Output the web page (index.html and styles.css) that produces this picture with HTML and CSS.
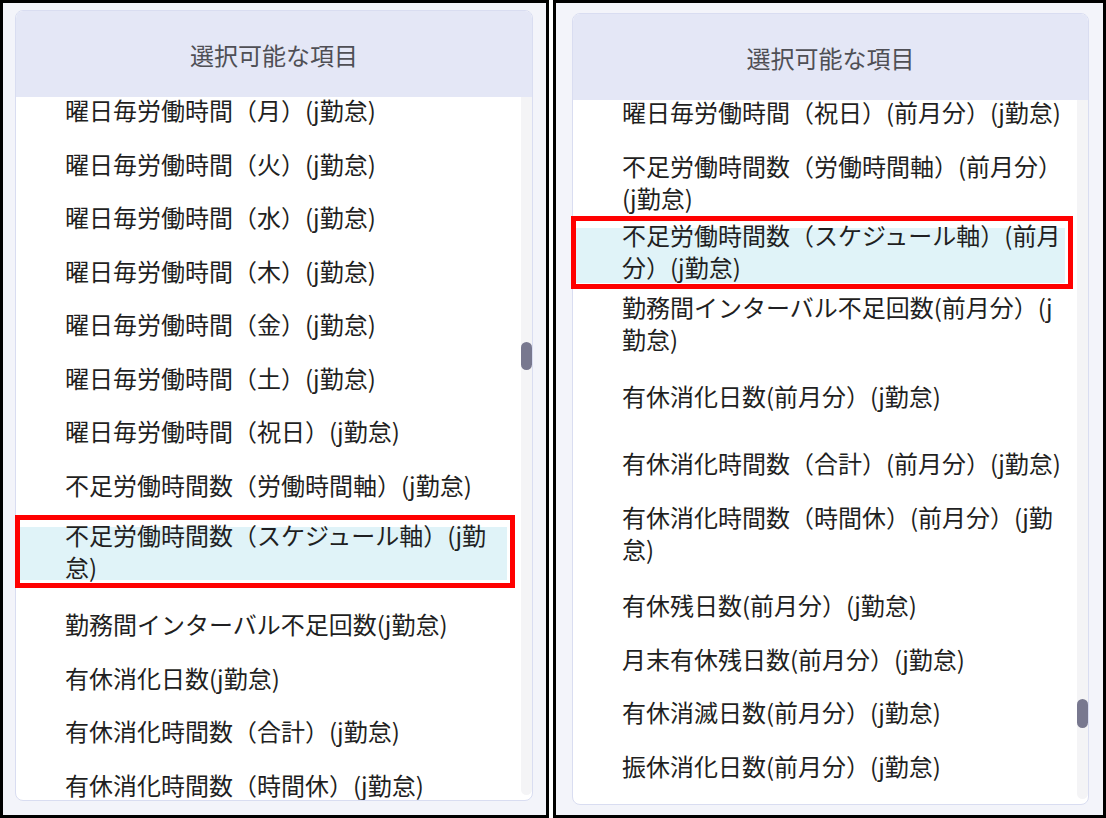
FILE: index.html
```html
<!DOCTYPE html>
<html lang="ja">

<head>
  <meta charset="UTF-8">
  <meta name="viewport" content="width=device-width, initial-scale=1.0">
  <title>選択可能な項目</title>
  <link rel="stylesheet" href="styles.css">
</head>

<body>
  <div class="panel panel-a">
    <section class="picker">
      <h2 class="picker-title">選択可能な項目</h2>
      <div class="picker-body">
        <div class="picker-view">
          <ul class="picker-list">
            <li class="item">曜日毎労働時間（月）(j勤怠)</li>
            <li class="item">曜日毎労働時間（火）(j勤怠)</li>
            <li class="item">曜日毎労働時間（水）(j勤怠)</li>
            <li class="item">曜日毎労働時間（木）(j勤怠)</li>
            <li class="item">曜日毎労働時間（金）(j勤怠)</li>
            <li class="item">曜日毎労働時間（土）(j勤怠)</li>
            <li class="item">曜日毎労働時間（祝日）(j勤怠)</li>
            <li class="item">不足労働時間数（労働時間軸）(j勤怠)</li>
            <li class="item item-active">不足労働時間数（スケジュール軸）(j勤怠)</li>
            <li class="item">勤務間インターバル不足回数(j勤怠)</li>
            <li class="item">有休消化日数(j勤怠)</li>
            <li class="item">有休消化時間数（合計）(j勤怠)</li>
            <li class="item">有休消化時間数（時間休）(j勤怠)</li>
          </ul>
        </div>
        <div class="scroll-track"><span class="scroll-thumb"></span></div>
      </div>
    </section>
    <div class="callout"></div>
  </div>

  <div class="panel panel-b">
    <section class="picker">
      <h2 class="picker-title">選択可能な項目</h2>
      <div class="picker-body">
        <div class="picker-view">
          <ul class="picker-list">
            <li class="item">曜日毎労働時間（祝日）(前月分）(j勤怠)</li>
            <li class="item item-wrap">不足労働時間数（労働時間軸）(前月分）(j勤怠)</li>
            <li class="item item-active">不足労働時間数（スケジュール軸）(前月分）(j勤怠)</li>
            <li class="item item-wrap">勤務間インターバル不足回数(前月分）(j勤怠)</li>
            <li class="item item-gap">有休消化日数(前月分）(j勤怠)</li>
            <li class="item">有休消化時間数（合計）(前月分）(j勤怠)</li>
            <li class="item item-wrap">有休消化時間数（時間休）(前月分）(j勤怠)</li>
            <li class="item">有休残日数(前月分）(j勤怠)</li>
            <li class="item">月末有休残日数(前月分）(j勤怠)</li>
            <li class="item">有休消滅日数(前月分）(j勤怠)</li>
            <li class="item">振休消化日数(前月分）(j勤怠)</li>
          </ul>
        </div>
        <div class="scroll-track"><span class="scroll-thumb"></span></div>
      </div>
    </section>
    <div class="callout"></div>
  </div>
</body>

</html>
```

FILE: styles.css
```css
* {
  margin: 0;
  padding: 0;
  box-sizing: border-box;
  font-family: 'Noto Sans CJK JP', 'Noto Sans', sans-serif;
}

html,
body {
  width: 100%;
  height: 100%;
}

body {
  background: #fff;
  display: flex;
  gap: 4px;
  overflow: hidden;
}

.panel {
  position: relative;
  height: 818px;
  background: #f3f4fa;
  border: 3px solid #000;
  display: flex;
}

.panel-a {
  width: 549px;
  padding: 7px 13px 14px 12px;
}

.panel-b {
  width: 553px;
  padding: 10px 14px 10px 16px;
}

.picker {
  flex: 1;
  display: flex;
  flex-direction: column;
  background: #fff;
  border: 1px solid #d9ddf1;
  border-radius: 8px;
  overflow: hidden;
}

.picker-title {
  height: 86px;
  flex: none;
  display: flex;
  justify-content: center;
  align-items: center;
  background: #e4e7f6;
  color: #4f4f55;
  font-size: 24px;
  font-weight: normal;
}

.picker-body {
  flex: 1;
  min-height: 0;
  display: flex;
}

.picker-view {
  flex: 1;
  overflow: hidden;
  padding-right: 14px;
}

.panel-b .picker-view {
  padding-right: 12px;
}

.picker-list {
  list-style: none;
  margin-top: -11.75px;
}

.panel-b .picker-list {
  margin-top: -12.75px;
}

.item {
  padding: 8.75px 0 12.75px 49px;
  color: #1f1f22;
  font-size: 24px;
  line-height: 32px;
}

.item-wrap {
  padding-bottom: 15.75px;
}

.item-gap {
  padding-bottom: 26.75px;
}

.panel-a .item-active {
  padding-top: 5.75px;
  padding-bottom: 16.25px;
  background: linear-gradient(to bottom,
      transparent 13.75px, #e0f3f8 13.75px,
      #e0f3f8 66.75px, transparent 66.75px);
}

.panel-b .item-active {
  padding-top: 0;
  padding-bottom: 0;
  margin: -10px 0 -1px;
  background: linear-gradient(to bottom,
      transparent 8.75px, #e0f3f8 8.75px,
      #e0f3f8 63.75px, transparent 63.75px);
}

.scroll-track {
  width: 11px;
  flex: none;
  margin-bottom: 5px;
  background: #f4f4f6;
  border-radius: 0 0 6px 6px;
}

.scroll-thumb {
  display: block;
  height: 28px;
  background: #78788f;
  border-radius: 6px;
}

.panel-a .scroll-thumb {
  margin-top: 245px;
}

.panel-b .scroll-thumb {
  margin-top: 599px;
  height: 29px;
}

/* red annotation frame drawn over the list */
.callout {
  position: absolute;
  height: 73px;
  border: 5px solid #f00;
}

.panel-a .callout {
  left: 12px;
  top: 512px;
  width: 500px;
}

.panel-b .callout {
  left: 15px;
  top: 213px;
  width: 502px;
}
```
